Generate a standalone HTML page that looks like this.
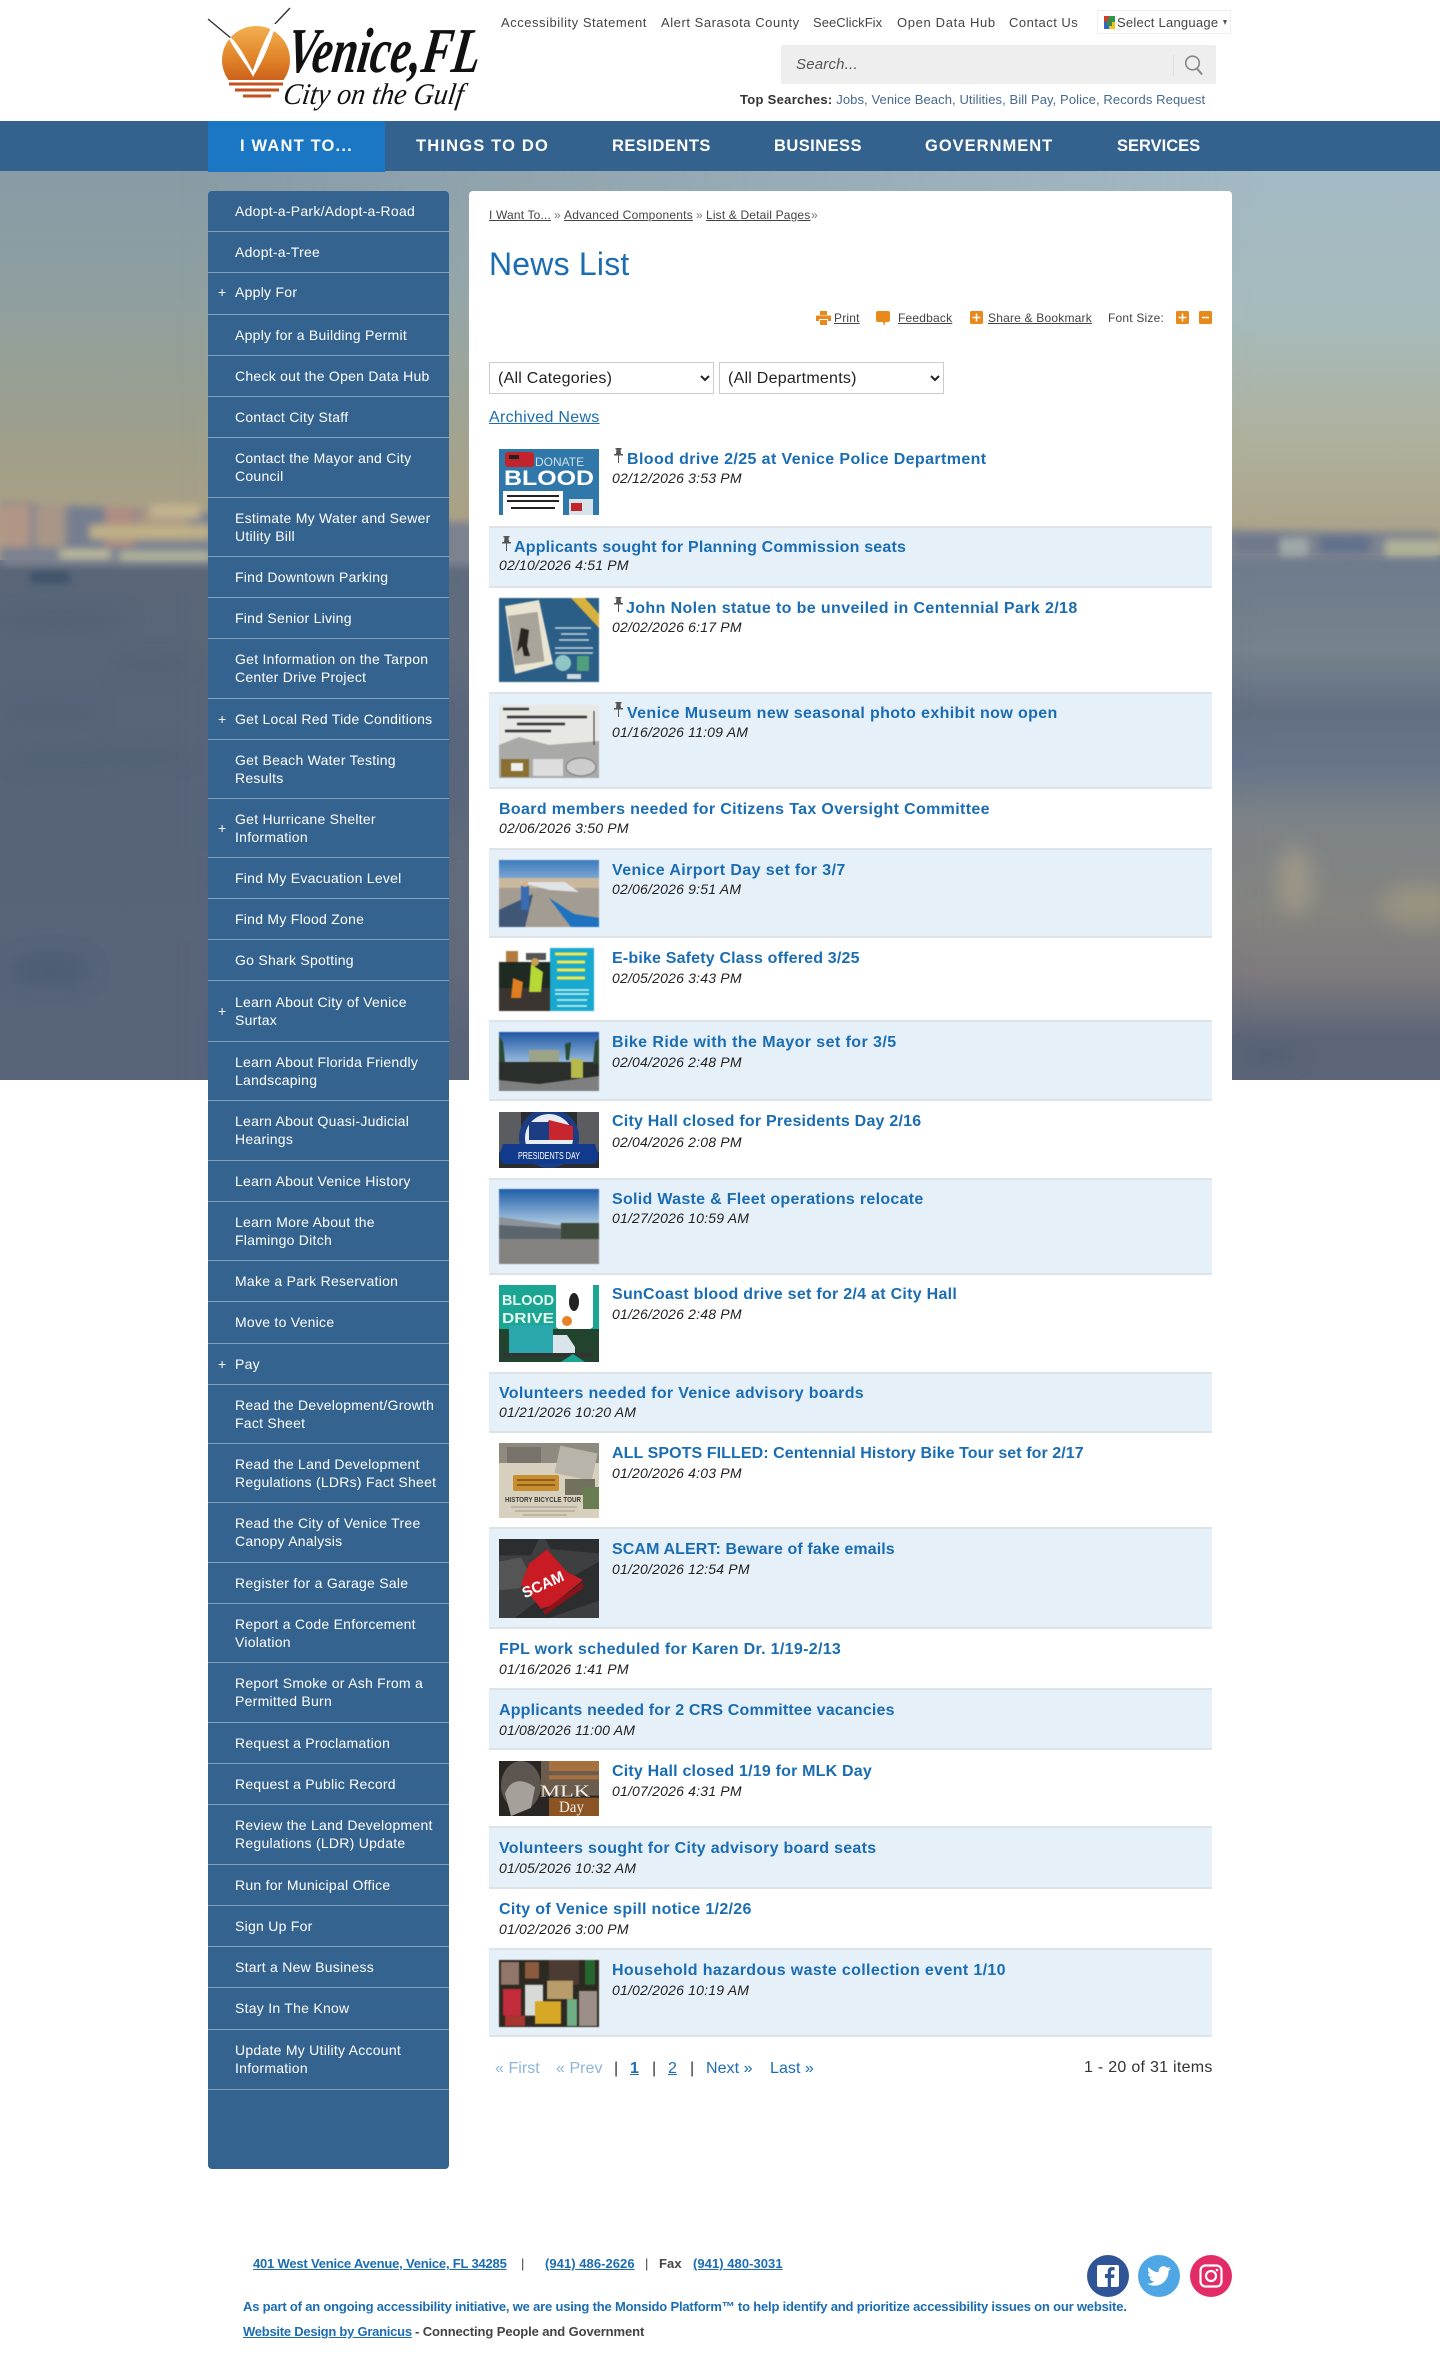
<!DOCTYPE html>
<html lang="en"><head><meta charset="utf-8"><title>News List - Venice, FL</title>
<style>
*{box-sizing:border-box}
html,body{margin:0;padding:0;background:#fff}
body{position:relative;width:1440px;height:2371px;overflow:hidden;font-family:"Liberation Sans",Arial,sans-serif;color:#333}
a{color:inherit}
.a{position:absolute;white-space:nowrap}
.top{top:13px;font-size:13px;line-height:20px;color:#444;letter-spacing:.33px}
.nav{top:134px;font-size:16.5px;line-height:24px;color:#fff;letter-spacing:1.08px;font-weight:bold}
#side{position:absolute;left:208px;top:191px;width:241px;height:1978px;background:#34638f;border-radius:4px}
.s{position:absolute;left:0;width:241px;border-bottom:1px solid #7fa0bf;color:#fff;font-size:14px;line-height:18px;letter-spacing:.26px;padding-left:27px;padding-right:6px;padding-bottom:1px;display:flex;align-items:center}
.s b{position:absolute;left:10px;font-weight:normal;font-size:14px}
.r{position:absolute;left:489px;width:723px;border-top:2px solid #dee3e7;border-bottom:2px solid #dee3e7}
.r.b{background:#e6f0f9}
.t{position:absolute;white-space:nowrap;font-size:16px;line-height:20px;font-weight:bold;color:#1b6db3}
.d{position:absolute;white-space:nowrap;font-size:14px;line-height:20px;font-style:italic;color:#222;letter-spacing:.2px}
.i{position:absolute;left:499px;width:100px;display:block}
.ph{filter:blur(.6px)}
.p{position:absolute;width:9px;height:15px}
.bc{top:206px;font-size:12px;line-height:18px;color:#444;letter-spacing:.16px}
.tl{top:309px;font-size:12px;line-height:18px;color:#444;letter-spacing:.2px}
.pg{top:2059px;font-size:16px;line-height:20px;color:#1b6db3;letter-spacing:.05px}
.f{font-size:13px;line-height:18px;letter-spacing:.1px}
select{position:absolute;top:362px;height:32px;width:225px;font-family:"Liberation Sans",Arial,sans-serif;font-size:16px;color:#222;background:#fff;border:1px solid #ccc;padding-left:4px;letter-spacing:.25px}
</style></head><body>

<!-- hero background -->
<svg class="a" style="left:0;top:171px" width="1440" height="909" viewBox="0 171 1440 909" preserveAspectRatio="none">
<defs>
<linearGradient id="sk" x1="0" x2="0" y1="171" y2="530" gradientUnits="userSpaceOnUse"><stop offset="0" stop-color="#889ba6"/><stop offset=".35" stop-color="#8f9fa0"/><stop offset=".7" stop-color="#9c9f8d"/><stop offset="1" stop-color="#aca083"/></linearGradient>
<linearGradient id="sk2" x1="0" x2="0" y1="171" y2="535" gradientUnits="userSpaceOnUse"><stop offset="0" stop-color="#a3b9c4"/><stop offset=".4" stop-color="#a6bbbc"/><stop offset=".75" stop-color="#afb09c"/><stop offset="1" stop-color="#aca388"/></linearGradient>
<linearGradient id="fade" x1="0" x2="1" y1="0" y2="0"><stop offset=".12" stop-color="#fff" stop-opacity="0"/><stop offset=".88" stop-color="#fff"/></linearGradient>
<mask id="m"><rect x="0" y="171" width="1440" height="909" fill="url(#fade)"/></mask>
<linearGradient id="wl" x1="0" x2="0" y1="560" y2="1080" gradientUnits="userSpaceOnUse"><stop offset="0" stop-color="#5a6678"/><stop offset=".5" stop-color="#566379"/><stop offset="1" stop-color="#58647a"/></linearGradient>
<linearGradient id="wr" x1="0" x2="0" y1="555" y2="1080" gradientUnits="userSpaceOnUse"><stop offset="0" stop-color="#6c7b8b"/><stop offset=".18" stop-color="#76838d"/><stop offset=".3" stop-color="#626f82"/><stop offset=".4" stop-color="#67748a"/><stop offset=".5" stop-color="#7c8388"/><stop offset=".68" stop-color="#858480"/><stop offset=".8" stop-color="#7e7a7e"/><stop offset=".92" stop-color="#5c6578"/><stop offset="1" stop-color="#5c6578"/></linearGradient>
<filter id="bl" filterUnits="userSpaceOnUse" x="-40" y="460" width="1520" height="160"><feGaussianBlur stdDeviation="4"/></filter>
<filter id="bl2" filterUnits="userSpaceOnUse" x="-40" y="560" width="1520" height="560"><feGaussianBlur stdDeviation="10"/></filter>
</defs>
<rect x="0" y="171" width="1440" height="400" fill="url(#sk)"/>
<rect x="0" y="171" width="1440" height="400" fill="url(#sk2)" mask="url(#m)"/>
<rect x="0" y="560" width="1440" height="520" fill="url(#wl)"/>
<rect x="0" y="555" width="1440" height="525" fill="url(#wr)" mask="url(#m)"/>
<g filter="url(#bl)">
<polygon points="0,502 208,512 470,522 1440,532 1440,559 470,566 0,566" fill="#7b8290"/>
<g opacity=".8"><rect x="0" y="505" width="30" height="42" fill="#bf9c83"/><rect x="35" y="505" width="30" height="42" fill="#b59b87"/>
<rect x="70" y="507" width="35" height="40" fill="#737e90"/><rect x="105" y="507" width="30" height="40" fill="#ba8f80"/><rect x="138" y="510" width="50" height="30" fill="#b89a80"/>
<rect x="150" y="505" width="50" height="14" fill="#d0bc90"/><rect x="90" y="525" width="120" height="14" fill="#d0bd85"/><rect x="60" y="550" width="50" height="8" fill="#d6cfa0"/><rect x="120" y="552" width="90" height="8" fill="#c8c89e"/>
<rect x="1235" y="535" width="60" height="18" fill="#6d778c"/><rect x="1280" y="538" width="28" height="18" fill="#a9b2ae"/><rect x="1320" y="536" width="50" height="17" fill="#5c6d8c"/><rect x="1385" y="540" width="55" height="16" fill="#bfc09a"/>
<rect x="30" y="570" width="40" height="14" fill="#3d5068"/></g>
</g>
<g filter="url(#bl2)" opacity=".5">
<ellipse cx="60" cy="620" rx="70" ry="6" fill="#44566e"/><ellipse cx="150" cy="665" rx="40" ry="5" fill="#42556e"/><ellipse cx="50" cy="712" rx="50" ry="6" fill="#44566e"/><ellipse cx="60" cy="760" rx="50" ry="5" fill="#44566e"/><ellipse cx="140" cy="755" rx="50" ry="5" fill="#44566e"/><ellipse cx="50" cy="970" rx="40" ry="14" fill="#41546c"/>
<ellipse cx="1295" cy="880" rx="18" ry="35" fill="#b4a88a"/><ellipse cx="1420" cy="905" rx="40" ry="22" fill="#aba283"/><ellipse cx="1270" cy="1055" rx="28" ry="6" fill="#3f5068"/><ellipse cx="460" cy="780" rx="20" ry="60" fill="#56647a"/>
</g>
</svg>

<!-- header -->
<div class="a" style="left:0;top:0;width:1440px;height:121px;background:#fff"></div>
<svg class="a" style="left:195px;top:0" width="300" height="120" viewBox="0 0 300 120">
<defs><linearGradient id="sun" x1="0" x2="0" y1="0" y2="1"><stop offset="0" stop-color="#f2b04f"/><stop offset=".5" stop-color="#e08227"/><stop offset="1" stop-color="#bf4a14"/></linearGradient>
<clipPath id="sc"><rect x="0" y="0" width="300" height="80"/></clipPath></defs>
<circle cx="61" cy="60" r="34" fill="url(#sun)" clip-path="url(#sc)"/>
<path d="M34 84h54M40 90h44M48 96h28" stroke="#c4501d" stroke-width="3" fill="none"/>
<path d="M13 19 L37 39 M95 8 L78 26" stroke="#333" stroke-width="1.4" fill="none"/>
<path d="M35 38 C46 50 50 60 58 74 C62 62 70 40 80 24 C72 48 66 62 58 74 C54 66 42 52 35 38Z" fill="#fff" stroke="#fff" stroke-width="2.5"/>
<text x="100" y="72" transform="skewX(-8)" font-family="Liberation Serif,serif" font-style="italic" font-weight="bold" font-size="64" textLength="193" lengthAdjust="spacingAndGlyphs" fill="#111">Venice,FL</text>
<text x="102" y="104" transform="skewX(-8)" font-family="Liberation Serif,serif" font-style="italic" font-size="30" textLength="180" lengthAdjust="spacingAndGlyphs" fill="#111">City on the Gulf</text>
</svg>
<div class="a top" style="left:501px;letter-spacing:.53px">Accessibility Statement</div>
<div class="a top" style="left:661px;letter-spacing:.55px">Alert Sarasota County</div>
<div class="a top" style="left:813px;letter-spacing:.05px">SeeClickFix</div>
<div class="a top" style="left:897px;letter-spacing:.65px">Open Data Hub</div>
<div class="a top" style="left:1009px;letter-spacing:.5px">Contact Us</div>
<div class="a" style="left:1097px;top:10px;width:134px;height:24px;border:1px solid #eee"></div>
<svg class="a" style="left:1104px;top:16px" width="11" height="13" viewBox="0 0 11 13"><rect width="5" height="6" fill="#d9392b"/><rect x="5" width="6" height="6" fill="#2d9a4a"/><rect y="6" width="5" height="7" fill="#3267c9"/><rect x="5" y="6" width="6" height="7" fill="#f2c21a"/><rect x="3" y="3" width="5" height="7" fill="#3a8a50"/></svg>
<div class="a top" style="left:1117px;letter-spacing:.25px">Select Language</div>
<div class="a" style="left:1223px;top:20px;width:0;height:0;border-left:2px solid transparent;border-right:2px solid transparent;border-top:5px solid #555"></div>
<div class="a" style="left:781px;top:45px;width:435px;height:39px;background:#eee;border-radius:2px"></div>
<div class="a" style="left:796px;top:55px;font-size:15px;line-height:20px;font-style:italic;color:#555;letter-spacing:.2px">Search...</div>
<div class="a" style="left:1173px;top:55px;width:1px;height:21px;background:#ddd"></div>
<svg class="a" style="left:1184px;top:54px" width="20" height="22" viewBox="0 0 20 22"><circle cx="8.5" cy="9" r="6.8" fill="none" stroke="#888" stroke-width="1.6"/><path d="M13 14.5l5 6" stroke="#888" stroke-width="2"/></svg>
<div class="a" style="left:740px;top:90px;font-size:13px;line-height:20px;color:#47698f;letter-spacing:.09px"><b style="color:#333;letter-spacing:.3px">Top Searches:</b> Jobs, Venice Beach, Utilities, Bill Pay, Police, Records Request</div>

<!-- nav -->
<div class="a" style="left:0;top:121px;width:1440px;height:50px;background:#33628f"></div>
<div class="a" style="left:208px;top:121px;width:177px;height:51px;background:#1b76c4"></div>
<div class="a nav" style="left:240px;letter-spacing:1.18px">I WANT TO...</div>
<div class="a nav" style="left:416px;letter-spacing:1.18px">THINGS TO DO</div>
<div class="a nav" style="left:612px;letter-spacing:.5px">RESIDENTS</div>
<div class="a nav" style="left:774px;letter-spacing:.45px">BUSINESS</div>
<div class="a nav" style="left:925px;letter-spacing:1px">GOVERNMENT</div>
<div class="a nav" style="left:1117px;letter-spacing:0">SERVICES</div>

<!-- sidebar -->
<div id="side"></div>
<div style="position:absolute;left:208px;top:0">
<div class="s" style="top:191px;height:41px">Adopt-a-Park/Adopt-a-Road</div>
<div class="s" style="top:232px;height:41px">Adopt-a-Tree</div>
<div class="s" style="top:273px;height:42px;padding-bottom:3px"><b>+</b>Apply For</div>
<div class="s" style="top:315px;height:41px">Apply for a Building Permit</div>
<div class="s" style="top:356px;height:41px">Check out the Open Data Hub</div>
<div class="s" style="top:397px;height:41px">Contact City Staff</div>
<div class="s" style="top:438px;height:60px">Contact the Mayor and City Council</div>
<div class="s" style="top:498px;height:59px">Estimate My Water and Sewer Utility Bill</div>
<div class="s" style="top:557px;height:41px">Find Downtown Parking</div>
<div class="s" style="top:598px;height:41px">Find Senior Living</div>
<div class="s" style="top:639px;height:60px">Get Information on the Tarpon Center Drive Project</div>
<div class="s" style="top:699px;height:41px"><b>+</b>Get Local Red Tide Conditions</div>
<div class="s" style="top:740px;height:59px">Get Beach Water Testing Results</div>
<div class="s" style="top:799px;height:59px"><b>+</b>Get Hurricane Shelter Information</div>
<div class="s" style="top:858px;height:41px">Find My Evacuation Level</div>
<div class="s" style="top:899px;height:41px">Find My Flood Zone</div>
<div class="s" style="top:940px;height:41px">Go Shark Spotting</div>
<div class="s" style="top:981px;height:61px"><b>+</b>Learn About City of Venice Surtax</div>
<div class="s" style="top:1042px;height:59px">Learn About Florida Friendly Landscaping</div>
<div class="s" style="top:1101px;height:60px">Learn About Quasi-Judicial Hearings</div>
<div class="s" style="top:1161px;height:41px">Learn About Venice History</div>
<div class="s" style="top:1202px;height:59px"><span>Learn More About the<br>Flamingo Ditch</span></div>
<div class="s" style="top:1261px;height:41px">Make a Park Reservation</div>
<div class="s" style="top:1302px;height:42px">Move to Venice</div>
<div class="s" style="top:1344px;height:41px"><b>+</b>Pay</div>
<div class="s" style="top:1385px;height:59px">Read the Development/Growth Fact Sheet</div>
<div class="s" style="top:1444px;height:59px">Read the Land Development Regulations (LDRs) Fact Sheet</div>
<div class="s" style="top:1503px;height:60px">Read the City of Venice Tree Canopy Analysis</div>
<div class="s" style="top:1563px;height:41px">Register for a Garage Sale</div>
<div class="s" style="top:1604px;height:59px">Report a Code Enforcement Violation</div>
<div class="s" style="top:1663px;height:60px">Report Smoke or Ash From a Permitted Burn</div>
<div class="s" style="top:1723px;height:41px">Request a Proclamation</div>
<div class="s" style="top:1764px;height:41px">Request a Public Record</div>
<div class="s" style="top:1805px;height:60px">Review the Land Development Regulations (LDR) Update</div>
<div class="s" style="top:1865px;height:41px">Run for Municipal Office</div>
<div class="s" style="top:1906px;height:41px">Sign Up For</div>
<div class="s" style="top:1947px;height:41px">Start a New Business</div>
<div class="s" style="top:1988px;height:42px">Stay In The Know</div>
<div class="s" style="top:2030px;height:60px">Update My Utility Account Information</div>
</div>

<!-- content -->
<div class="a" style="left:469px;top:191px;width:763px;height:2000px;background:#fff;border-radius:4px 4px 0 0"></div>
<div class="a bc" style="left:489px"><u>I Want To...</u></div><div class="a bc" style="left:554px;color:#777">»</div>
<div class="a bc" style="left:564px;letter-spacing:.22px"><u>Advanced Components</u></div><div class="a bc" style="left:696px;color:#777">»</div>
<div class="a bc" style="left:706px"><u>List &amp; Detail Pages</u></div><div class="a bc" style="left:811px;color:#777">»</div>
<div class="a" style="left:489px;top:244px;font-size:32px;line-height:40px;color:#1b6db3;letter-spacing:.2px">News List</div>

<svg class="a" style="left:816px;top:311px" width="15" height="14" viewBox="0 0 15 14"><path d="M4 0h7v4H4zM1 4.500h13a1 1 0 0 1 1 1V10h-3V8H3v2H0V5.500a1 1 0 0 1 1-1zM4 9h7v5H4z" fill="#e8891c"/></svg>
<div class="a tl" style="left:834px"><u>Print</u></div>
<svg class="a" style="left:876px;top:311px" width="14" height="15" viewBox="0 0 14 15"><path d="M2 0h10a2 2 0 0 1 2 2v7a2 2 0 0 1-2 2H9.500L8 15 7 11H2a2 2 0 0 1-2-2V2a2 2 0 0 1 2-2z" fill="#e8891c"/></svg>
<div class="a tl" style="left:898px"><u>Feedback</u></div>
<svg class="a" style="left:970px;top:311px" width="13" height="13" viewBox="0 0 13 13"><rect width="13" height="13" rx="1.500" fill="#e8891c"/><path d="M6.500 2.500v8M2.500 6.500h8" stroke="#fff" stroke-width="1.500"/></svg>
<div class="a tl" style="left:988px"><u>Share &amp; Bookmark</u></div>
<div class="a tl" style="left:1108px">Font Size:</div>
<svg class="a" style="left:1176px;top:311px" width="13" height="13" viewBox="0 0 13 13"><rect width="13" height="13" rx="1.500" fill="#e8891c"/><path d="M6.500 2.500v8M2.500 6.500h8" stroke="#fff" stroke-width="1.500"/></svg>
<svg class="a" style="left:1199px;top:311px" width="13" height="13" viewBox="0 0 13 13"><rect width="13" height="13" rx="1.500" fill="#e8891c"/><path d="M3 6.500h7" stroke="#fff" stroke-width="1.500"/></svg>

<select style="left:489px"><option>(All Categories)</option></select>
<select style="left:719px"><option>(All Departments)</option></select>
<div class="a" style="left:489px;top:408px;font-size:16px;line-height:20px;color:#1b6db3;letter-spacing:.3px"><u>Archived News</u></div>

<!-- rows -->
<div class="r b" style="top:526px;height:62px"></div>
<div class="r b" style="top:692px;height:97px"></div>
<div class="r b" style="top:848px;height:90px"></div>
<div class="r b" style="top:1020px;height:81px"></div>
<div class="r b" style="top:1178px;height:97px"></div>
<div class="r b" style="top:1372px;height:61px"></div>
<div class="r b" style="top:1527px;height:102px"></div>
<div class="r b" style="top:1688px;height:62px"></div>
<div class="r b" style="top:1826px;height:63px"></div>
<div class="r b" style="top:1948px;height:89px"></div>

<!-- pins -->
<svg class="p" style="left:614px;top:448px" viewBox="0 0 9 15"><path d="M1.500 0h6v1.500H6.500L7 6h2v1.500H5V15H4V7.500H0V6h2l.5-4.500h-1z" fill="#555"/></svg>
<svg class="p" style="left:502px;top:536px" viewBox="0 0 9 15"><path d="M1.500 0h6v1.500H6.500L7 6h2v1.500H5V15H4V7.500H0V6h2l.5-4.500h-1z" fill="#555"/></svg>
<svg class="p" style="left:614px;top:597px" viewBox="0 0 9 15"><path d="M1.500 0h6v1.500H6.500L7 6h2v1.500H5V15H4V7.500H0V6h2l.5-4.500h-1z" fill="#555"/></svg>
<svg class="p" style="left:614px;top:702px" viewBox="0 0 9 15"><path d="M1.500 0h6v1.500H6.500L7 6h2v1.500H5V15H4V7.500H0V6h2l.5-4.500h-1z" fill="#555"/></svg>

<div class="t" style="left:627px;top:450px;letter-spacing:.39px">Blood drive 2/25 at Venice Police Department</div><div class="d" style="left:612px;top:468px">02/12/2026 3:53 PM</div>
<div class="t" style="left:514px;top:538px;letter-spacing:.19px">Applicants sought for Planning Commission seats</div><div class="d" style="left:499px;top:555px">02/10/2026 4:51 PM</div>
<div class="t" style="left:626px;top:599px;letter-spacing:.38px">John Nolen statue to be unveiled in Centennial Park 2/18</div><div class="d" style="left:612px;top:617px">02/02/2026 6:17 PM</div>
<div class="t" style="left:627px;top:704px;letter-spacing:.37px">Venice Museum new seasonal photo exhibit now open</div><div class="d" style="left:612px;top:722px">01/16/2026 11:09 AM</div>
<div class="t" style="left:499px;top:800px;letter-spacing:.35px">Board members needed for Citizens Tax Oversight Committee</div><div class="d" style="left:499px;top:818px">02/06/2026 3:50 PM</div>
<div class="t" style="left:612px;top:861px;letter-spacing:.4px">Venice Airport Day set for 3/7</div><div class="d" style="left:612px;top:879px">02/06/2026 9:51 AM</div>
<div class="t" style="left:612px;top:949px;letter-spacing:.18px">E-bike Safety Class offered 3/25</div><div class="d" style="left:612px;top:968px">02/05/2026 3:43 PM</div>
<div class="t" style="left:612px;top:1033px;letter-spacing:.42px">Bike Ride with the Mayor set for 3/5</div><div class="d" style="left:612px;top:1052px">02/04/2026 2:48 PM</div>
<div class="t" style="left:612px;top:1112px;letter-spacing:.22px">City Hall closed for Presidents Day 2/16</div><div class="d" style="left:612px;top:1132px">02/04/2026 2:08 PM</div>
<div class="t" style="left:612px;top:1190px;letter-spacing:.3px">Solid Waste &amp; Fleet operations relocate</div><div class="d" style="left:612px;top:1208px">01/27/2026 10:59 AM</div>
<div class="t" style="left:612px;top:1285px;letter-spacing:.28px">SunCoast blood drive set for 2/4 at City Hall</div><div class="d" style="left:612px;top:1304px">01/26/2026 2:48 PM</div>
<div class="t" style="left:499px;top:1384px;letter-spacing:.32px">Volunteers needed for Venice advisory boards</div><div class="d" style="left:499px;top:1402px">01/21/2026 10:20 AM</div>
<div class="t" style="left:612px;top:1444px;letter-spacing:.08px">ALL SPOTS FILLED: Centennial History Bike Tour set for 2/17</div><div class="d" style="left:612px;top:1463px">01/20/2026 4:03 PM</div>
<div class="t" style="left:612px;top:1540px;letter-spacing:.1px">SCAM ALERT: Beware of fake emails</div><div class="d" style="left:612px;top:1559px">01/20/2026 12:54 PM</div>
<div class="t" style="left:499px;top:1640px;letter-spacing:.32px">FPL work scheduled for Karen Dr. 1/19-2/13</div><div class="d" style="left:499px;top:1659px">01/16/2026 1:41 PM</div>
<div class="t" style="left:499px;top:1701px;letter-spacing:.17px">Applicants needed for 2 CRS Committee vacancies</div><div class="d" style="left:499px;top:1720px">01/08/2026 11:00 AM</div>
<div class="t" style="left:612px;top:1762px;letter-spacing:.2px">City Hall closed 1/19 for MLK Day</div><div class="d" style="left:612px;top:1781px">01/07/2026 4:31 PM</div>
<div class="t" style="left:499px;top:1839px;letter-spacing:.28px">Volunteers sought for City advisory board seats</div><div class="d" style="left:499px;top:1858px">01/05/2026 10:32 AM</div>
<div class="t" style="left:499px;top:1900px;letter-spacing:.32px">City of Venice spill notice 1/2/26</div><div class="d" style="left:499px;top:1919px">01/02/2026 3:00 PM</div>
<div class="t" style="left:612px;top:1961px;letter-spacing:.36px">Household hazardous waste collection event 1/10</div><div class="d" style="left:612px;top:1980px">01/02/2026 10:19 AM</div>

<!-- thumbnails -->
<svg class="i" style="top:449px;height:66px" viewBox="0 0 100 66"><rect width="100" height="66" fill="#3077aa"/><rect x="6" y="3" width="29" height="15" rx="3" fill="#c3232b"/><rect x="10" y="6" width="10" height="4" fill="#222"/><text x="36" y="17" font-size="12" fill="#cfe0ee" font-family="Liberation Sans">DONATE</text><text x="5" y="36" font-size="21" font-weight="bold" fill="#fff" font-family="Liberation Sans" textLength="90" lengthAdjust="spacingAndGlyphs">BLOOD</text><rect x="4" y="42" width="60" height="24" fill="#fff"/><path d="M8 47h52M8 52h52M12 59h44" stroke="#222" stroke-width="2"/><rect x="70" y="50" width="24" height="16" fill="#d7e3ea"/><rect x="72" y="54" width="11" height="8" fill="#c3232b"/></svg>
<svg class="i ph" style="top:598px;height:84px" viewBox="0 0 100 84"><rect width="100" height="84" fill="#2a5e86"/><path d="M72 0h14l14 16v14z" fill="#d7b23d"/><path d="M6 8L40 2l14 64-38 10z" fill="#e9e3d2"/><rect x="12" y="16" width="30" height="50" transform="rotate(-8 25 40)" fill="#a8a49a"/><path d="M22 30l8 2-2 16 3 10-6 0-2-10-5 6z" fill="#2b2622"/><path d="M56 30h36M62 36h26M60 42h30M56 50h38M56 55h38" stroke="#c7d6e0" stroke-width="1.500"/><circle cx="64" cy="65" r="8" fill="#8fc6c4"/><rect x="78" y="58" width="12" height="15" fill="#4f9f7c"/><rect x="68" y="76" width="14" height="5" fill="#cfd8de"/></svg>
<svg class="i ph" style="top:705px;height:73px" viewBox="0 0 100 73"><rect width="100" height="73" fill="#e7e7e4"/><path d="M4 4h26M8 12h80M18 19h48M6 26h46" stroke="#333" stroke-width="2.500"/><path d="M0 40l20-8 30 8 50-4v37H0z" fill="#a9aaa8"/><path d="M95 6v34" stroke="#333"/><rect x="2" y="54" width="28" height="18" fill="#8a6f33"/><rect x="12" y="58" width="12" height="8" fill="#eee"/><rect x="34" y="54" width="30" height="17" fill="#ddd"/><ellipse cx="82" cy="62" rx="15" ry="9" fill="#ccc" stroke="#777"/></svg>
<svg class="i ph" style="top:860px;height:67px" viewBox="0 0 100 67"><defs><linearGradient id="g1" x1="0" x2="0" y1="0" y2="1"><stop offset="0" stop-color="#3c7abb"/><stop offset="1" stop-color="#9dc0e0"/></linearGradient></defs><rect width="100" height="28" fill="url(#g1)"/><rect y="18" width="100" height="10" fill="#c9b89c"/><rect y="28" width="100" height="39" fill="#a39c92"/><path d="M0 50l34-16-8 33H0z" fill="#3f5677"/><path d="M50 38l25 16 26 4v9H72z" fill="#1e72c0"/><path d="M20 22h46l14 10-30-2z" fill="#dfe3e8"/><rect x="22" y="26" width="8" height="24" fill="#3a6cb4"/><circle cx="26" cy="24" r="3" fill="#d8b090"/></svg>
<svg class="i ph" style="top:948px;height:63px" viewBox="0 0 100 63"><rect width="100" height="63" fill="#fff"/><rect x="7" y="3" width="12" height="11" fill="#b37c3e"/><rect x="27" y="5" width="20" height="7" fill="#555"/><rect x="51" y="0" width="44" height="63" fill="#19a8cf"/><path d="M56 6h32M58 14h28M58 22h28M58 30h28" stroke="#f4e94a" stroke-width="3"/><path d="M56 42h34M56 46h34M58 52h30M58 58h30" stroke="#d5f5ef" stroke-width="1.500"/><rect y="14" width="51" height="49" fill="#1f2a22"/><rect y="40" width="51" height="23" fill="#3a3530"/><path d="M32 16l12 8-2 20h-12z" fill="#b8d935"/><path d="M14 30l10 4-2 16H12z" fill="#df7d22"/><circle cx="36" cy="14" r="4" fill="#c9a050"/></svg>
<svg class="i ph" style="top:1032px;height:59px" viewBox="0 0 100 59"><defs><linearGradient id="g2" x1="0" x2="0" y1="0" y2="1"><stop offset="0" stop-color="#1f56a3"/><stop offset="1" stop-color="#a7c8e5"/></linearGradient></defs><rect width="100" height="34" fill="url(#g2)"/><rect y="32" width="100" height="27" fill="#7f7f80"/><path d="M0 30h100v14l-60 8-40-4z" fill="#2a2f2b"/><path d="M72 26l12 2v18h-12z" fill="#b7ba4a"/><path d="M30 18h30v12H30z" fill="#9ca488"/><path d="M96 10l4-4v26h-6zM4 10l-4-6v26h6zM66 12l6-2-2 18h-3z" fill="#2b4a33"/></svg>
<svg class="i" style="top:1112px;height:56px" viewBox="0 0 100 56"><rect width="100" height="56" fill="#2b2d30"/><path d="M0 0h22v40H0zM78 0h22v40H78z" fill="#5a5c60"/><circle cx="50" cy="26" r="30" fill="#1c3d83"/><circle cx="50" cy="26" r="24" fill="#e9edf3"/><path d="M50 8l24 6v14H40z" fill="#c8262f"/><path d="M30 10h20v18H30z" fill="#1c3d83"/><path d="M4 32h92l4 12-4 8H4L0 44z" fill="#123a8c"/><text x="50" y="47" font-size="10" fill="#fff" text-anchor="middle" font-family="Liberation Sans" textLength="62" lengthAdjust="spacingAndGlyphs">PRESIDENTS DAY</text></svg>
<svg class="i ph" style="top:1189px;height:75px" viewBox="0 0 100 75"><defs><linearGradient id="g3" x1="0" x2="0" y1="0" y2="1"><stop offset="0" stop-color="#1e5ea7"/><stop offset="1" stop-color="#cfe2f0"/></linearGradient></defs><rect width="100" height="44" fill="url(#g3)"/><path d="M0 28l58 8 42 0v18H0z" fill="#8d9499"/><path d="M0 36l70 4v14H0z" fill="#5b666c"/><path d="M62 34l38 0v16H62z" fill="#3d4a3b"/><rect y="50" width="100" height="25" fill="#83827f"/></svg>
<svg class="i" style="top:1285px;height:77px" viewBox="0 0 100 77"><rect width="100" height="77" fill="#1ba593"/><text x="3" y="20" font-size="15" font-weight="bold" fill="#e4f6ee" font-family="Liberation Sans" textLength="52" lengthAdjust="spacingAndGlyphs">BLOOD</text><text x="3" y="38" font-size="15" font-weight="bold" fill="#e4f6ee" font-family="Liberation Sans" textLength="52" lengthAdjust="spacingAndGlyphs">DRIVE</text><path d="M57 0h37v42L75 56 57 42z" fill="#fff"/><ellipse cx="75" cy="17" rx="5" ry="9" fill="#222"/><circle cx="68" cy="36" r="5" fill="#e48428"/><rect y="44" width="100" height="33" fill="#22432e"/><rect x="10" y="40" width="44" height="28" fill="#2aa7ad"/><path d="M54 50h14l8 12v6H54z" fill="#d9e5ea"/><rect x="4" y="68" width="90" height="4" fill="#333"/><path d="M62 77l12-8 12 8z" fill="#1ba593"/></svg>
<svg class="i" style="top:1443px;height:75px" viewBox="0 0 100 75"><rect width="100" height="75" fill="#d7d0bf"/><rect width="100" height="20" fill="#8f8a80"/><rect x="8" y="4" width="34" height="16" fill="#77736a"/><rect x="58" y="6" width="38" height="28" fill="#b9b4aa" transform="rotate(12 76 20)"/><rect x="66" y="36" width="30" height="16" fill="#72705f"/><rect x="14" y="32" width="46" height="16" rx="2" fill="#c98e2f"/><path d="M18 37h38M18 42h38" stroke="#7a4f12" stroke-width="1.500"/><text x="6" y="59" font-size="7.500" font-weight="bold" fill="#3a3a34" font-family="Liberation Sans" textLength="76" lengthAdjust="spacingAndGlyphs">HISTORY BICYCLE TOUR</text><path d="M12 64h66M16 68h60M24 72h44" stroke="#a09a88"/><path d="M84 44h16v22H84z" fill="#6a7d52"/></svg>
<svg class="i" style="top:1539px;height:79px" viewBox="0 0 100 77" preserveAspectRatio="none"><rect width="100" height="77" fill="#3e3f41"/><path d="M0 0h40L32 16H0zM46 0h54v14L52 10zM60 44l40-22v38l-50 17H16z" fill="#2c2d2f"/><path d="M0 22l22-4 10 18-12 12L0 50z" fill="#555"/><path d="M30 24l18-14 20 22 16 8-32 25-10 3-20-24z" fill="#c81b24"/><path d="M44 70l40-28v6l-38 26z" fill="#8e1218"/><text x="46" y="49" font-size="15" font-weight="bold" fill="#fff" text-anchor="middle" font-family="Liberation Sans" transform="rotate(-24 46 49)">SCAM</text></svg>
<svg class="i" style="top:1761px;height:55px" viewBox="0 0 100 54" preserveAspectRatio="none"><rect width="100" height="54" fill="#2a2623"/><rect x="42" width="58" height="34" fill="#6b5c4e"/><path d="M50 0h50v10H50zM50 14h50v4H50z" fill="#a6713f"/><rect x="50" y="36" width="50" height="18" fill="#8a5425"/><ellipse cx="22" cy="24" rx="20" ry="24" fill="#5d5650"/><path d="M6 32c6-16 20-14 30-6l-4 20-20 8z" fill="#a6a09a"/><text x="41" y="35" font-family="Liberation Serif" font-size="17" fill="#f2efe6" textLength="50" lengthAdjust="spacingAndGlyphs">MLK</text><text x="60" y="50" font-family="Liberation Serif" font-size="15" fill="#f2efe6">Day</text></svg>
<svg class="i ph" style="top:1960px;height:67px" viewBox="0 0 100 65" preserveAspectRatio="none"><rect width="100" height="65" fill="#2d2a22"/><rect x="2" y="2" width="18" height="22" fill="#93766a"/><rect x="26" y="2" width="14" height="16" fill="#8c5a3c"/><rect x="50" y="0" width="30" height="24" fill="#4b3b32"/><rect x="86" y="0" width="10" height="24" fill="#27662f"/><rect x="4" y="28" width="18" height="26" fill="#c12b3a"/><rect x="26" y="24" width="18" height="30" fill="#d7dbd7"/><rect x="36" y="40" width="26" height="22" fill="#d7a825"/><rect x="48" y="20" width="26" height="18" fill="#b89c6a"/><rect x="68" y="38" width="10" height="26" fill="#6fae83"/><rect x="80" y="30" width="18" height="34" fill="#9b8f88"/><rect x="6" y="54" width="20" height="10" fill="#a8352f"/></svg>

<!-- pagination -->
<div class="a pg" style="left:495px;color:#8db5d9">« First</div>
<div class="a pg" style="left:556px;color:#8db5d9">« Prev</div>
<div class="a pg" style="left:614px;color:#333">|</div>
<div class="a pg" style="left:630px;font-weight:bold"><u>1</u></div>
<div class="a pg" style="left:652px;color:#333">|</div>
<div class="a pg" style="left:668px"><u>2</u></div>
<div class="a pg" style="left:690px;color:#333">|</div>
<div class="a pg" style="left:706px">Next »</div>
<div class="a pg" style="left:770px">Last »</div>
<div class="a pg" style="left:1084px;top:2058px;color:#333;letter-spacing:.28px">1 - 20 of 31 items</div>

<!-- footer -->
<div class="a f" style="left:253px;top:2255px;color:#1b6db3;font-weight:bold;letter-spacing:-.2px"><u>401 West Venice Avenue, Venice, FL 34285</u></div>
<div class="a f" style="left:521px;top:2255px;color:#444">|</div>
<div class="a f" style="left:545px;top:2255px;color:#1b6db3;font-weight:bold;letter-spacing:.05px"><u>(941) 486-2626</u></div>
<div class="a f" style="left:645px;top:2255px;color:#444">|</div>
<div class="a f" style="left:659px;top:2255px;color:#444;font-weight:bold">Fax</div>
<div class="a f" style="left:693px;top:2255px;color:#1b6db3;font-weight:bold;letter-spacing:.05px"><u>(941) 480-3031</u></div>
<div class="a f" style="left:243px;top:2298px;color:#1b6db3;font-weight:bold;letter-spacing:-.19px">As part of an ongoing accessibility initiative, we are using the Monsido Platform™ to help identify and prioritize accessibility issues on our website.</div>
<div class="a f" style="left:243px;top:2323px;color:#1b6db3;font-weight:bold;letter-spacing:-.25px"><u>Website Design by Granicus</u></div>
<div class="a f" style="left:415px;top:2323px;color:#444;font-weight:bold;letter-spacing:-.1px">- Connecting People and Government</div>

<svg class="a" style="left:1087px;top:2255px" width="146" height="42" viewBox="0 0 146 42">
<circle cx="21" cy="21" r="21" fill="#2f5597"/><rect x="10" y="10" width="22" height="22" rx="2" fill="#fff"/><path d="M24 32V23h3l.5-3.500H24V17c0-1 .4-1.700 1.800-1.700h1.800v-3.100c-.4 0-1.400-.2-2.600-.2-2.600 0-4.300 1.600-4.300 4.400v2.600H18V23h2.700v9z" fill="#2f5597"/>
<circle cx="72" cy="21" r="21" fill="#4fa6e5"/><path d="M84 13.500c-.9.400-1.800.7-2.800.800 1-.600 1.800-1.600 2.100-2.700-.9.600-2 1-3.100 1.200a4.900 4.900 0 0 0-8.400 4.500c-4.100-.2-7.700-2.200-10.100-5.200-1.300 2.200-.700 5.100 1.500 6.600-.8 0-1.600-.2-2.200-.6 0 2.400 1.700 4.400 3.900 4.900-.7.200-1.500.2-2.200.1.600 2 2.400 3.400 4.600 3.400a9.900 9.900 0 0 1-7.300 2 14 14 0 0 0 21.500-12.400c1-.700 1.800-1.600 2.500-2.600z" fill="#fff"/>
<circle cx="124" cy="21" r="21" fill="#e32b66"/><rect x="113.500" y="10.500" width="21" height="21" rx="5" fill="none" stroke="#fff" stroke-width="2.200"/><circle cx="124" cy="21" r="5" fill="none" stroke="#fff" stroke-width="2.200"/><circle cx="130" cy="15" r="1.300" fill="#fff"/>
</svg>
</body></html>
